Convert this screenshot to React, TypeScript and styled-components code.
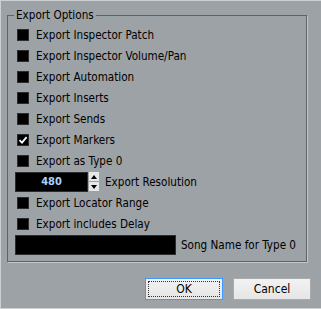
import React from "react";
import styled, { createGlobalStyle } from "styled-components";

const GlobalStyle = createGlobalStyle`
  html, body {
    margin: 0;
    padding: 0;
    background: #9da2a6;
  }
  body {
    font-family: "DejaVu Sans Condensed", "Liberation Sans", Arial, sans-serif;
    font-size: 11.6px;
    color: #000;
  }
`;

const Window = styled.div`
  width: 321px;
  height: 309px;
  box-sizing: border-box;
  padding: 8px 14px 0 7px;
  background: #9da2a6;
  box-shadow: inset 1px 1px 0 #cdd0d2, inset 0 -1px 0 #cdd0d2;
  display: flex;
  flex-direction: column;
`;

const Group = styled.fieldset`
  margin: 0;
  width: 300px;
  height: 254px;
  box-sizing: border-box;
  padding: 2px 7px 0 7px;
  border: 1px solid #5f6367;
  box-shadow: 1px 1px 0 #c3c6c9;
  display: flex;
  flex-direction: column;
`;

const Legend = styled.legend`
  padding: 0 2px;
  margin-left: -1px;
  line-height: 14px;
`;

const Row = styled.div<{ $gap?: number }>`
  height: 21px;
  display: flex;
  align-items: center;
  gap: ${(p) => p.$gap ?? 7}px;
`;

const Box = styled.span`
  width: 12px;
  height: 12px;
  margin-left: 2px;
  box-sizing: border-box;
  background: #000;
  border: 1px solid #2b2b2b;
  display: flex;
  align-items: center;
  justify-content: center;
`;

const Label = styled.span`
  white-space: nowrap;
`;

const SpinWrap = styled.div`
  display: flex;
  align-items: center;
  gap: 1px;
`;

const Field = styled.div<{ $w: number }>`
  width: ${(p) => p.$w}px;
  height: 20px;
  box-sizing: border-box;
  background: #000;
  border: 1px solid #2a2c2e;
  display: flex;
  align-items: center;
  justify-content: center;
  color: #a9d2ff;
  font-weight: bold;
  font-size: 11px;
`;

const SpinButtons = styled.div`
  display: flex;
  flex-direction: column;
  gap: 1px;
`;

const SpinButton = styled.div`
  width: 10px;
  height: 9px;
  background: #e6e7e8;
  display: flex;
  align-items: center;
  justify-content: center;
`;

const Footer = styled.div`
  margin-top: 16px;
  margin-right: -4px;
  display: flex;
  justify-content: flex-end;
  gap: 10px;
`;

const Button = styled.button<{ $focused?: boolean }>`
  width: 78px;
  height: 22px;
  padding: 0;
  box-sizing: border-box;
  font: inherit;
  font-size: 12px;
  color: #000;
  border: 1px solid ${(p) => (p.$focused ? "#3d9bff" : "#a9abad")};
  background: linear-gradient(#f2f2f2, #e6e6e6);
  outline: ${(p) => (p.$focused ? "1px dotted #333" : "none")};
  outline-offset: -4px;
`;

function Check({ checked }: { checked?: boolean }) {
  return (
    <Box>
      {checked && (
        <svg width="10" height="10" viewBox="0 0 10 10">
          <path d="M1.5 5.2 L4 7.6 L8.6 2.2" stroke="#fff" strokeWidth="1.8" fill="none" />
        </svg>
      )}
    </Box>
  );
}

const options: [string, boolean][] = [
  ["Export Inspector Patch", false],
  ["Export Inspector Volume/Pan", false],
  ["Export Automation", false],
  ["Export Inserts", false],
  ["Export Sends", false],
  ["Export Markers", true],
  ["Export as Type 0", false],
];

export default function App() {
  return (
    <Window>
      <GlobalStyle />
      <Group>
        <Legend>Export Options</Legend>
        {options.map(([label, checked]) => (
          <Row key={label}>
            <Check checked={checked} />
            <Label>{label}</Label>
          </Row>
        ))}
        <Row $gap={6}>
          <SpinWrap>
            <Field $w={73}>480</Field>
            <SpinButtons>
              <SpinButton>
                <svg width="6" height="4" viewBox="0 0 6 4">
                  <path d="M3 0 L6 4 L0 4 Z" fill="#000" />
                </svg>
              </SpinButton>
              <SpinButton>
                <svg width="6" height="4" viewBox="0 0 6 4">
                  <path d="M0 0 L6 0 L3 4 Z" fill="#000" />
                </svg>
              </SpinButton>
            </SpinButtons>
          </SpinWrap>
          <Label>Export Resolution</Label>
        </Row>
        <Row>
          <Check />
          <Label>Export Locator Range</Label>
        </Row>
        <Row>
          <Check />
          <Label>Export includes Delay</Label>
        </Row>
        <Row $gap={5}>
          <Field $w={161} />
          <Label>Song Name for Type 0</Label>
        </Row>
      </Group>
      <Footer>
        <Button $focused>OK</Button>
        <Button>Cancel</Button>
      </Footer>
    </Window>
  );
}
